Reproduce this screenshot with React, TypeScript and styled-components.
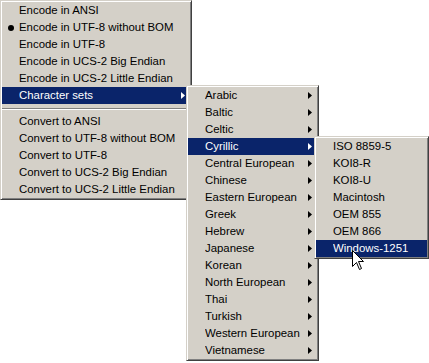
import React from 'react';
import styled, {createGlobalStyle} from "styled-components";

const GlobalStyle = createGlobalStyle`
  html, body {
    margin: 0;
    padding: 0;
    background: #fff;
  }

  body {
    font-family: Tahoma, "Liberation Sans", Arial, sans-serif;
    font-size: 11.4px;
  }
`

const Desktop = styled.div`
  position: relative;
  width: 429px;
  height: 363px;
  overflow: hidden;
  background: #fff;
`

// popup menus float over each other, so each one is placed on the canvas
const Menu = styled.div<{ $left: number, $top: number, $width: number }>`
  position: absolute;
  left: ${p => p.$left}px;
  top: ${p => p.$top}px;
  width: ${p => p.$width}px;
  box-sizing: border-box;
  padding: 1px;
  background: #d4d0c8;
  border: 1px solid;
  border-color: #d4d0c8 #404040 #404040 #d4d0c8;
  box-shadow: inset 1px 1px 0 #fff, inset -1px -1px 0 #808080;
`

const Item = styled.div<{ $active?: boolean }>`
  display: grid;
  grid-template-columns: 17px 1fr 9px;
  align-items: center;
  height: 17px;
  line-height: 17px;
  white-space: nowrap;
  color: ${p => p.$active ? '#fff' : '#000'};
  background: ${p => p.$active ? '#0a246a' : 'transparent'};
`

const Check = styled.span`
  display: flex;
  justify-content: center;
  align-items: center;
`

const Bullet = styled.span`
  display: block;
  width: 6px;
  height: 6px;
  border-radius: 50%;
  background: currentColor;
  margin-left: 1px;
`

const Label = styled.span`
  overflow: hidden;
`

const Arrow = styled.svg`
  display: block;
  fill: currentColor;
`

const Separator = styled.div`
  height: 2px;
  margin: 4px 0 3px;
  border-top: 1px solid #808080;
  border-bottom: 1px solid #fff;
  box-sizing: border-box;
`

const Cursor = styled.svg`
  position: absolute;
  left: 352px;
  top: 250px;
`

type Entry = { label?: string, sub?: boolean, active?: boolean, bullet?: boolean, sep?: boolean }

const mainItems: Entry[] = [
  {label: 'Encode in ANSI'},
  {label: 'Encode in UTF-8 without BOM', bullet: true},
  {label: 'Encode in UTF-8'},
  {label: 'Encode in UCS-2 Big Endian'},
  {label: 'Encode in UCS-2 Little Endian'},
  {label: 'Character sets', sub: true, active: true},
  {sep: true},
  {label: 'Convert to ANSI'},
  {label: 'Convert to UTF-8 without BOM'},
  {label: 'Convert to UTF-8'},
  {label: 'Convert to UCS-2 Big Endian'},
  {label: 'Convert to UCS-2 Little Endian'},
]

const charsets = [
  'Arabic', 'Baltic', 'Celtic', 'Cyrillic', 'Central European', 'Chinese',
  'Eastern European', 'Greek', 'Hebrew', 'Japanese', 'Korean', 'North European',
  'Thai', 'Turkish', 'Western European', 'Vietnamese',
]

const cyrillic = ['ISO 8859-5', 'KOI8-R', 'KOI8-U', 'Macintosh', 'OEM 855', 'OEM 866', 'Windows-1251']

const MenuList: React.FC<{ items: Entry[] }> = ({items}) => (
  <>
    {items.map((it, i) => it.sep ? <Separator key={i}/> : (
      <Item key={i} $active={it.active}>
        <Check>{it.bullet ? <Bullet/> : null}</Check>
        <Label>{it.label}</Label>
        {it.sub ? (
          <Arrow width="4" height="7" viewBox="0 0 4 7">
            <polygon points="0,0 4,3.5 0,7"/>
          </Arrow>
        ) : <span/>}
      </Item>
    ))}
  </>
)

const App: React.FC = () => {
  return (
    <Desktop>
      <GlobalStyle/>
      <Menu $left={0} $top={0} $width={192}>
        <MenuList items={mainItems}/>
      </Menu>
      <Menu $left={186} $top={85} $width={133}>
        <MenuList items={charsets.map(c => ({label: c, sub: true, active: c === 'Cyrillic'}))}/>
      </Menu>
      <Menu $left={314} $top={136} $width={115}>
        <MenuList items={cyrillic.map(c => ({label: c, active: c === 'Windows-1251'}))}/>
      </Menu>
      <Cursor width="13" height="21" viewBox="0 0 13 21">
        <path d="M0.5 0.5 L0.5 16.5 L4.5 12.5 L7.5 19.5 L9.5 18.5 L6.5 11.5 L11.5 11.5 Z"
              fill="#fff" stroke="#000" strokeWidth="1"/>
      </Cursor>
    </Desktop>
  );
};

export default App;
